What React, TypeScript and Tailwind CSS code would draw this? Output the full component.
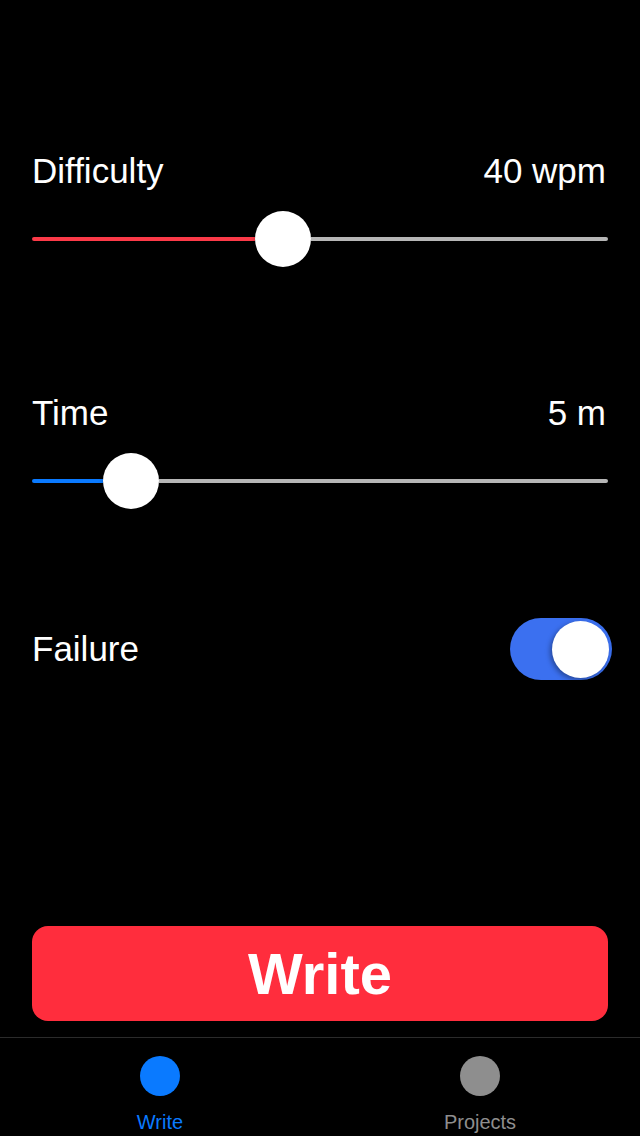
const font = { fontFamily: '"Liberation Sans", Arial, sans-serif' }

function Slider({ filled, color }: { filled: number; color: string }) {
  return (
    <div className="flex h-14 items-center">
      <div className={`h-[4px] rounded-l-full ${color}`} style={{ width: filled }} />
      <div className="h-14 w-14 shrink-0 rounded-full bg-white shadow-[0_2px_4px_rgba(0,0,0,0.3)]" />
      <div className="h-[4px] flex-1 rounded-r-full bg-[#b6b6b6]" />
    </div>
  )
}

function Row({ label, value }: { label: string; value?: string }) {
  return (
    <div className="flex h-10 items-center justify-between text-[35px] text-white">
      <span>{label}</span>
      {value && <span className="pr-[2px]">{value}</span>}
    </div>
  )
}

export default function App() {
  return (
    <div className="flex h-[1136px] w-[640px] flex-col bg-black" style={font}>
      <div className="px-8">
        <div className="mt-[151px]">
          <Row label="Difficulty" value="40 wpm" />
        </div>
        <div className="mt-[20px]">
          <Slider filled={223} color="bg-[#fc3a48]" />
        </div>

        <div className="mt-[126px]">
          <Row label="Time" value="5 m" />
        </div>
        <div className="mt-[20px]">
          <Slider filled={71} color="bg-[#0a7aff]" />
        </div>

        <div className="mt-[109px] flex h-[62px] items-center justify-between">
          <span className="text-[35px] text-white">Failure</span>
          <div className="-mr-1 flex h-[62px] w-[102px] items-center justify-end rounded-full bg-[#3b70f0] pr-[3px]">
            <div className="h-[57px] w-[57px] rounded-full bg-white shadow-[-2px_2px_5px_rgba(0,0,0,0.35)]" />
          </div>
        </div>
      </div>

      <div className="mt-auto px-8 pb-4">
        <button className="flex h-[95px] w-full items-center justify-center rounded-2xl bg-[#ff2d3d] text-[58px] font-bold text-white">
          Write
        </button>
      </div>

      <nav className="flex h-[99px] border-t border-[#2b2b2b]">
        <div className="flex flex-1 flex-col items-center pt-[18px]">
          <div className="h-10 w-10 rounded-full bg-[#0a7aff]" />
          <span className="mt-[14px] text-[20px] leading-6 text-[#0a7aff]">Write</span>
        </div>
        <div className="flex flex-1 flex-col items-center pt-[18px]">
          <div className="h-10 w-10 rounded-full bg-[#8e8e8e]" />
          <span className="mt-[14px] text-[20px] leading-6 text-[#8e8e8e]">Projects</span>
        </div>
      </nav>
    </div>
  )
}
